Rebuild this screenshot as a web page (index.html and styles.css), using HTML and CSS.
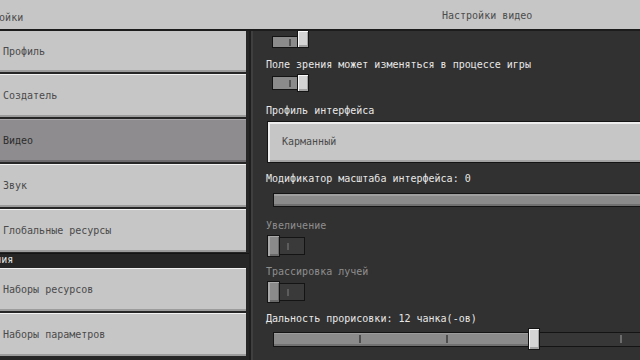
FILE: index.html
```html
<!DOCTYPE html>
<html lang="ru">
<head>
    <meta charset="UTF-8">
    <meta name="viewport" content="width=device-width, initial-scale=1.0">
    <title>Настройки видео</title>
    <link rel="stylesheet" href="styles.css">
</head>
<body>

<div class="header">
    <div class="header-left">Настройки</div>
    <div class="header-right">Настройки видео</div>
</div>

<div class="main">
    <!-- Sidebar -->
    <div class="sidebar">
        <div class="nav-btn first">Профиль</div>
        <div class="nav-btn">Создатель</div>
        <div class="nav-btn active">Видео</div>
        <div class="nav-btn">Звук</div>
        <div class="nav-btn">Глобальные ресурсы</div>
        <div class="nav-label">Дополнения</div>
        <div class="nav-btn">Наборы ресурсов</div>
        <div class="nav-btn">Наборы параметров</div>
    </div>

    <!-- Video settings -->
    <div class="content">
        <div class="toggle on cut">
            <div class="track"><span class="tick"></span></div>
            <div class="knob"></div>
        </div>

        <div class="label l-fov">Поле зрения может изменяться в процессе игры</div>
        <div class="toggle on t-fov">
            <div class="track"><span class="tick"></span></div>
            <div class="knob"></div>
        </div>

        <div class="label l-ui">Профиль интерфейса</div>
        <div class="dropdown">Карманный</div>

        <div class="label l-scale">Модификатор масштаба интерфейса: 0</div>
        <div class="slider-full"></div>

        <div class="label disabled l-zoom">Увеличение</div>
        <div class="toggle off">
            <div class="knob"></div>
            <div class="track"><span class="tick"></span></div>
        </div>

        <div class="label disabled l-rt">Трассировка лучей</div>
        <div class="toggle off">
            <div class="knob"></div>
            <div class="track"><span class="tick"></span></div>
        </div>

        <div class="label l-dist">Дальность прорисовки: 12 чанка(-ов)</div>
        <div class="slider">
            <div class="seg fill"><span class="tick"></span><span class="tick"></span></div>
            <div class="slider-knob"></div>
            <div class="seg empty"><span class="tick"></span></div>
        </div>
    </div>
</div>

</body>
</html>
```

FILE: styles.css
```css
body {
    margin: 0;
    padding: 0;
    background-color: #1e1e1e;
    font-family: 'DejaVu Sans Mono', 'Liberation Mono', monospace;
    font-size: 10px;
    line-height: 12px;
    overflow: hidden;
    width: 640px;
    height: 360px;
}

.header {
    display: flex;
    height: 29px;
    box-sizing: border-box;
    padding-top: 3px;
    background-color: #c6c6c6;
    border-bottom: 2px solid #1c1c1c;
    color: #4c4c4c;
    align-items: center;
    white-space: nowrap;
    height: 31px;
}

.header-left {
    width: 249px;
    text-indent: -31px;
    overflow: hidden;
    padding-top: 3px;
}

.header-right {
    flex: 1;
    padding-left: 193px;
    padding-bottom: 1px;
}

.main {
    display: flex;
    height: 329px;
}

/* Sidebar */
.sidebar {
    width: 249px;
    display: flex;
    flex-direction: column;
    gap: 2px;
    background-color: #262626;
}

.nav-btn {
    width: 246px;
    height: 43px;
    flex: none;
    box-sizing: border-box;
    display: flex;
    align-items: center;
    padding-left: 3px;
    background-color: #c6c6c6;
    color: #4a4a4a;
    box-shadow: inset 0 1px 0 #f2f2f2, inset 0 -2px 0 #9c9c9c;
    white-space: nowrap;
}

.nav-btn.first {
    height: 41px;
    box-shadow: inset 0 -2px 0 #9c9c9c;
}

.nav-btn.active {
    background-color: #8e8c8f;
    color: #2c2c2c;
    box-shadow: inset 0 1px 0 #a9a7aa, inset 0 -2px 0 #6c6a6d;
}

.nav-label {
    height: 12px;
    flex: none;
    color: #e6e6e6;
    text-indent: -47px;
    overflow: hidden;
    white-space: nowrap;
    border-top: 1px solid #151515;
    margin-top: -1px;
}

/* Content */
.content {
    flex: 1;
    margin-left: 2px;
    border-left: 2px solid #3f3f3f;
    background-color: #313131;
    padding-left: 13px;
    overflow: hidden;
}

.label {
    color: #e8e8e8;
    white-space: nowrap;
    height: 12px;
}

.label.disabled {
    color: #8e8e8e;
}

.l-fov { margin-top: 11px; }
.l-ui { margin-top: 13px; }
.l-scale { margin-top: 10px; }
.l-zoom { margin-top: 13px; }
.l-rt { margin-top: 9px; }
.l-dist { margin-top: 10px; }

/* Toggles */
.toggle {
    display: flex;
    align-items: center;
    width: 38px;
    height: 22px;
    margin-top: 3px;
    margin-left: 1px;
}

.toggle .track {
    flex: 1;
    height: 18px;
    box-sizing: border-box;
    border: 1px solid #141414;
    display: flex;
    align-items: center;
}

.toggle .knob {
    width: 13px;
    height: 100%;
    box-sizing: border-box;
    border: 1px solid #141414;
}

.toggle .tick {
    width: 2px;
    height: 7px;
}

.toggle.on {
    width: 37px;
    height: 18px;
    margin-left: 6px;
}

.toggle.on .track {
    height: 14px;
    background-color: #8b8b8b;
    justify-content: flex-end;
    padding-right: 6px;
    border-right: none;
}

.toggle.on .tick {
    background-color: #555;
}

.toggle.on .knob {
    width: 12px;
    background-color: #d4d4d4;
    box-shadow: inset 1px 1px 0 #fafafa, inset -1px -2px 0 #a2a2a2;
}

.toggle.cut {
    height: 17px;
    margin-top: 0;
    align-items: flex-end;
}

.toggle.cut .track {
    height: 12px;
}

.toggle.cut .knob {
    border-top: none;
}

.toggle.off .track {
    height: 18px;
    background-color: #3a3a3a;
    padding-left: 7px;
    border-left: none;
}

.toggle.off .tick {
    background-color: #5c5c5c;
}

.toggle.off .knob {
    background-color: #8a8a8a;
    box-shadow: inset 2px 1px 0 #a9a9a9, inset -1px -2px 0 #6a6a6a;
}

.t-fov {
    margin-top: 3px;
}

/* Dropdown */
.dropdown {
    margin-top: 4px;
    margin-left: 1px;
    margin-right: -20px;
    height: 42px;
    box-sizing: border-box;
    border: 1px solid #141414;
    background-color: #c6c6c6;
    box-shadow: inset 2px 2px 0 #ededed, inset 0 -2px 0 #a4a4a4;
    color: #4a4a4a;
    display: flex;
    align-items: center;
    padding-left: 14px;
}

/* Sliders */
.slider-full {
    margin-top: 8px;
    margin-left: 7px;
    margin-right: -20px;
    height: 14px;
    box-sizing: border-box;
    border: 1px solid #141414;
    background-color: #8b8b8b;
    box-shadow: inset 0 2px 0 #9f9f9f, inset 0 -2px 0 #707070;
}

.slider {
    display: flex;
    align-items: center;
    height: 22px;
    margin-top: 3px;
    margin-left: 7px;
    margin-right: -20px;
}

.slider .seg {
    height: 15px;
    box-sizing: border-box;
    border-top: 1px solid #141414;
    border-bottom: 1px solid #141414;
    display: flex;
    align-items: center;
}

.slider .fill {
    width: 255px;
    border-left: 1px solid #141414;
    background-color: #8b8b8b;
    box-shadow: inset 0 1px 0 #9d9d9d, inset 0 -2px 0 #717171;
    padding-left: 85px;
    gap: 85px;
}

.slider .fill .tick {
    background-color: #4e4e4e;
}

.slider .empty {
    flex: 1;
    background-color: #373737;
    padding-left: 80px;
}

.slider .empty .tick {
    background-color: #6c6c6c;
}

.slider .tick {
    width: 2px;
    height: 8px;
}

.slider-knob {
    width: 12px;
    height: 22px;
    box-sizing: border-box;
    border: 1px solid #141414;
    background-color: #d4d4d4;
    box-shadow: inset 1px 1px 0 #fafafa, inset -1px -2px 0 #a2a2a2;
}
```
